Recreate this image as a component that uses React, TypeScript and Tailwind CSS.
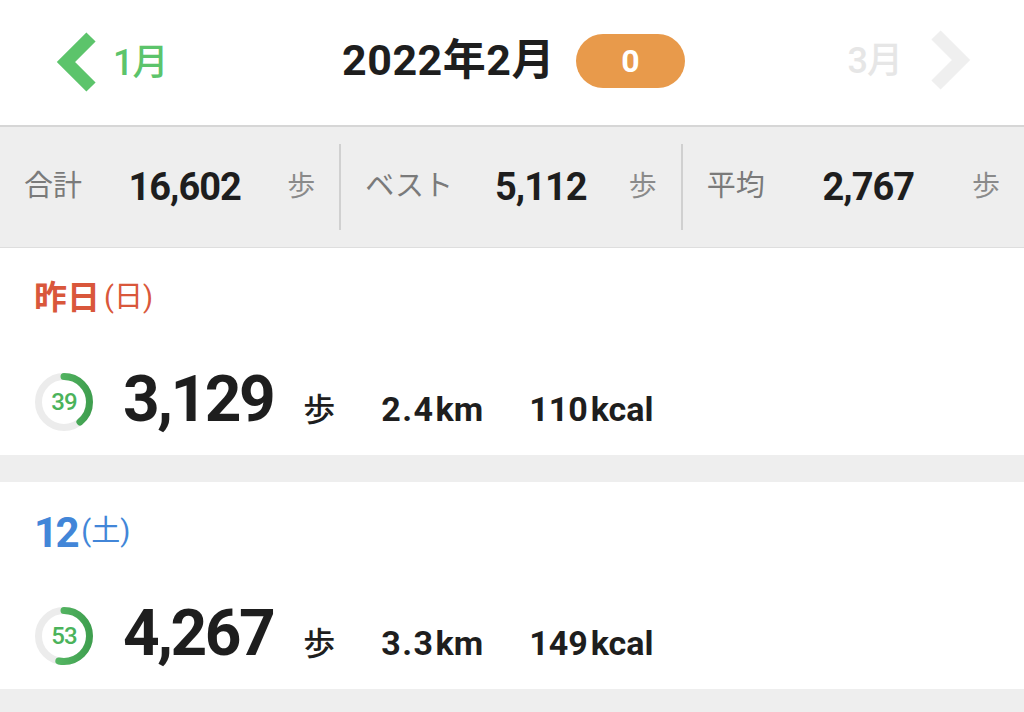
import React from "react";

const FONT = { fontFamily: "Roboto, 'Noto Sans CJK JP', sans-serif" };

const Ring = ({ pct }: { pct: number }) => {
  const r = 25.5;
  const c = 2 * Math.PI * r;
  return (
    <div className="relative w-[60px] h-[60px] shrink-0">
      <svg width="60" height="60" viewBox="0 0 60 60">
        <defs>
          <linearGradient id={`g${pct}`} x1="0" y1="0" x2="0" y2="1">
            <stop offset="0" stopColor="#62c46f" />
            <stop offset="1" stopColor="#3f9f4f" />
          </linearGradient>
        </defs>
        <circle cx="30" cy="30" r={r} fill="none" stroke="#ececec" strokeWidth="7" />
        <circle
          cx="30"
          cy="30"
          r={r}
          fill="none"
          stroke={`url(#g${pct})`}
          strokeWidth="7"
          strokeLinecap="round"
          strokeDasharray={`${(c * pct) / 100} ${c}`}
          transform="rotate(-90 30 30)"
        />
      </svg>
      <span className="absolute inset-0 flex items-center justify-center text-[24px] font-medium tracking-[-1px] text-[#4bb35b]">
        {pct}
      </span>
    </div>
  );
};

const DayCard = ({
  title,
  sub,
  color,
  titleSize,
  pct,
  steps,
  km,
  kcal,
}: {
  title: string;
  sub: string;
  color: string;
  titleSize: string;
  pct: number;
  steps: string;
  km: string;
  kcal: string;
}) => (
  <div className="bg-white h-[207px] flex flex-col pl-[34px]">
    <div className="h-[100px] flex items-center" style={{ color }}>
      <span className={`${titleSize} font-bold`}>{title}</span>
      <span className="text-[29px] ml-[4px]">({sub})</span>
    </div>
    <div className="h-[107px] flex items-center">
      <Ring pct={pct} />
      <div className="flex items-baseline ml-[29px] text-[#1e1e1e] font-bold">
        <span className="text-[64px] tracking-[-2.5px] leading-none">{steps}</span>
        <span className="text-[32px] font-medium ml-[30px]">歩</span>
        <span className="text-[34px] ml-[46px] tracking-[1.5px]">
          {km}
          <span className="ml-[1px] tracking-[0px]">km</span>
        </span>
        <span className="text-[34px] ml-[46px]">
          {kcal}
          <span className="ml-[3px]">kcal</span>
        </span>
      </div>
    </div>
  </div>
);

const Stat = ({ label, value, last }: { label: string; value: string; last?: boolean }) => (
  <div className="flex-1 flex items-center">
    <div className="flex-1 flex items-center justify-between px-6">
      <span className="text-[29px] text-[#7a7a7a]">{label}</span>
      <span className="text-[38px] font-bold text-[#1e1e1e] tracking-[-1px]">{value}</span>
      <span className="text-[28px] text-[#8a8a8a]">歩</span>
    </div>
    {!last && <div className="w-[2px] h-[86px] bg-[#d0d0d0]" />}
  </div>
);

export default function App() {
  return (
    <div className="w-[1024px] h-[712px] overflow-hidden bg-[#eeeeee]" style={FONT}>
      <header className="h-[127px] bg-white border-b-2 border-[#d6d6d6] flex items-center justify-between pl-[53px] pr-[50px]">
        <div className="flex items-center w-[200px]">
          <svg width="46" height="64" viewBox="0 0 46 64">
            <polyline
              points="38,6 13,31 38,56"
              fill="none"
              stroke="#5cc46b"
              strokeWidth="13"
              strokeLinejoin="miter"
            />
          </svg>
          <span className="text-[36px] font-medium text-[#5cc46b] ml-[14px] tracking-[-1px]">1月</span>
        </div>
        <div className="flex items-center -mt-[4px]">
          <span className="text-[43px] font-bold text-[#1e1e1e] tracking-[0.5px]">2022年2月</span>
          <span className="ml-[21px] w-[109px] h-[54px] rounded-full bg-[#e89a4b] flex items-center justify-center text-white text-[32px] font-bold">
            0
          </span>
        </div>
        <div className="flex items-center justify-end w-[200px] -mt-[4px]">
          <span className="text-[36px] font-medium text-[#e6e6e6] tracking-[-1px]">3月</span>
          <svg width="46" height="64" viewBox="0 0 46 64" className="ml-[26px]">
            <polyline
              points="8,6 33,31 8,56"
              fill="none"
              stroke="#efefef"
              strokeWidth="13"
              strokeLinejoin="miter"
            />
          </svg>
        </div>
      </header>
      <div className="h-[121px] bg-[#eeeeee] border-b border-[#dedede] flex">
        <Stat label="合計" value="16,602" />
        <Stat label="ベスト" value="5,112" />
        <Stat label="平均" value="2,767" last />
      </div>
      <DayCard
        title="昨日"
        sub="日"
        color="#d9573b"
        titleSize="text-[33px]"
        pct={39}
        steps="3,129"
        km="2.4"
        kcal="110"
      />
      <div className="h-[27px]" />
      <DayCard
        title="12"
        sub="土"
        color="#4286d8"
        titleSize="text-[42px] tracking-[-2.5px]"
        pct={53}
        steps="4,267"
        km="3.3"
        kcal="149"
      />
    </div>
  );
}
